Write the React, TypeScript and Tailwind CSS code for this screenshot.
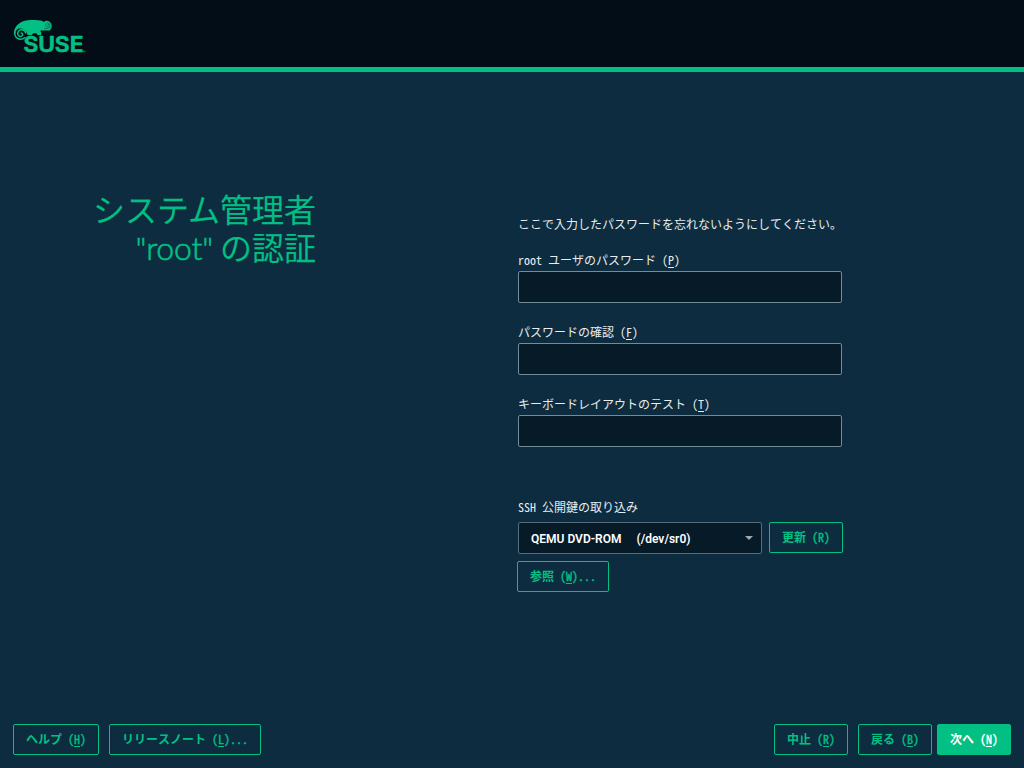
import type { ReactNode } from "react";

const jp = "font-['Noto_Sans_Mono_CJK_JP','Noto_Sans_CJK_JP',monospace]";

function Key({ children }: { children: ReactNode }) {
  return <span className="relative after:absolute after:inset-x-0 after:bottom-0 after:h-px after:bg-current">{children}</span>;
}

type ButtonProps = { label: string; hotkey: string; underlined?: boolean; suffix?: string; className?: string };

function Button({ label, hotkey, underlined = true, suffix = "", className = "" }: ButtonProps) {
  return (
    <button className={`flex h-[31px] items-center justify-center rounded-[2px] border border-[#02c083] pb-[2px] text-[12px] leading-[18px] font-bold whitespace-pre ${className}`}>
      <span>
        {label}{" "}
        <span className="font-normal [-webkit-text-stroke:0.35px_currentColor]">
          ({underlined ? <Key>{hotkey}</Key> : hotkey}){suffix}
        </span>
      </span>
    </button>
  );
}

function Field({ label, hotkey }: { label: string; hotkey: string }) {
  return (
    <label className="flex h-[72px] flex-col">
      <span className="h-5 leading-[18px] whitespace-pre">{label} (<Key>{hotkey}</Key>)</span>
      <input type="password" className="h-8 w-[324px] rounded-[2px] border border-[#718d9c] bg-[#071a28] outline-none" />
    </label>
  );
}

function Logo() {
  return (
    <svg width="76" height="44" viewBox="0 0 76 44" fill="none" className="text-[#02c083]">
      <path
        fill="currentColor"
        d="M1 14.5C.8 8.5 5 4 11 2C15 .8 20 .8 25 1.2C28 1.4 30 2 31.2 3C31.8 2 33.5 1.6 35 2C37 2.4 38.3 4 38.6 6C38.9 8.4 38.2 10.6 36.5 11.4H27.6C27.2 12.4 28 13 28.2 13.6V16H24.6L23.4 14.2H20.4L18.6 16H14.6L13.4 13C12 10.6 9.6 9.4 7.2 9.4C4.4 9.4 2.6 11.2 2.4 14.5Z"
      />
      <path
        stroke="currentColor"
        strokeWidth="1.5"
        strokeLinecap="round"
        d="M1.8 13C1.2 17.2 4 20.2 7.6 20.2C9.4 20.2 10.8 19.6 11.6 18.6M12.8 14C12 11.8 10.2 10.4 8 10.8C5.6 11.2 4.4 13.2 4.8 15.2C5.2 17.2 7.4 18 8.8 17C10.2 16 9.8 14 8.2 13.9"
      />
      <circle cx="34.8" cy="5.9" r="2.2" stroke="#086148" strokeWidth="0.7" />
      <circle cx="35.2" cy="5.8" r="0.7" fill="#086148" />
      <path d="M31 9.6C33.2 9.8 35.6 9.4 37.6 8.4" stroke="#086148" strokeWidth="0.7" />
      <text
        x="10.4"
        y="33"
        textLength="60"
        lengthAdjust="spacingAndGlyphs"
        fill="currentColor"
        stroke="currentColor"
        strokeWidth="0.7"
        strokeLinejoin="round"
        className="font-['Inter',sans-serif] text-[21px] font-semibold"
      >
        SUSE
      </text>
      <circle cx="71" cy="32.4" r="0.8" stroke="currentColor" strokeWidth="0.5" />
    </svg>
  );
}

export default function App() {
  return (
    <div className={`flex h-screen w-full flex-col overflow-hidden bg-[#0d2c40] text-[12px] font-[350] text-[#e8edef] ${jp}`}>
      <header className="h-[72px] shrink-0 border-b-[5px] border-[#02c083] bg-[#020d18] pt-[19px] pl-[13px]"><Logo /></header>
      <main className="flex flex-1">
        <h1 className="w-[316px] shrink-0 pt-[117px] text-right font-['Noto_Sans_CJK_JP',sans-serif] text-[32px] leading-[38px] font-[350] text-[#02c083] [-webkit-text-stroke:0.25px_currentColor]">
          システム管理者<br /><span className="font-['Lato',sans-serif] font-light tracking-[-0.2px] [-webkit-text-stroke:0.6px_currentColor]">"root"</span> の認証
        </h1>
        <section className="ml-[202px] flex w-[326px] flex-col pt-[143px]">
          <p className="h-9 leading-[18px] whitespace-nowrap">ここで入力したパスワードを忘れないようにしてください。</p>
          <Field label="root ユーザのパスワード" hotkey="P" />
          <Field label="パスワードの確認" hotkey="F" />
          <Field label="キーボードレイアウトのテスト" hotkey="T" />
          <p className="mt-[31px] h-6 leading-[18px]">SSH 公開鍵の取り込み</p>
          <div className="flex gap-[7px]">
            <div className="flex h-8 w-[244px] items-center justify-between rounded-[2px] border border-[#566e7b] bg-[#071a28] pr-2 pl-3 font-['Roboto',sans-serif] font-semibold whitespace-pre text-white">
              <span className="pt-[2px]">QEMU DVD-ROM<span className="ml-[15px]">(/dev/sr0)</span></span>
              <svg width="8" height="4" fill="#a0a8ac"><path d="M0 0H8L4 4Z" /></svg>
            </div>
            <Button label="更新" hotkey="R" underlined={false} className="w-[74px] text-[#02c083]" />
          </div>
          <Button label="参照" hotkey="W" suffix="..." className="mt-[7px] -ml-px w-[92px] text-[#02c083]" />
        </section>
      </main>
      <footer className="flex h-[44px] shrink-0 px-[13px] text-[#02c083]">
        <Button label="ヘルプ" hotkey="H" className="w-[86px]" />
        <Button label="リリースノート" hotkey="L" suffix="..." className="ml-[10px] w-[152px]" />
        <Button label="中止" hotkey="R" className="ml-auto w-[74px]" />
        <Button label="戻る" hotkey="B" className="ml-[10px] w-[74px]" />
        <Button label="次へ" hotkey="N" className="ml-[5px] w-[74px] bg-[#02c083] text-white" />
      </footer>
    </div>
  );
}
